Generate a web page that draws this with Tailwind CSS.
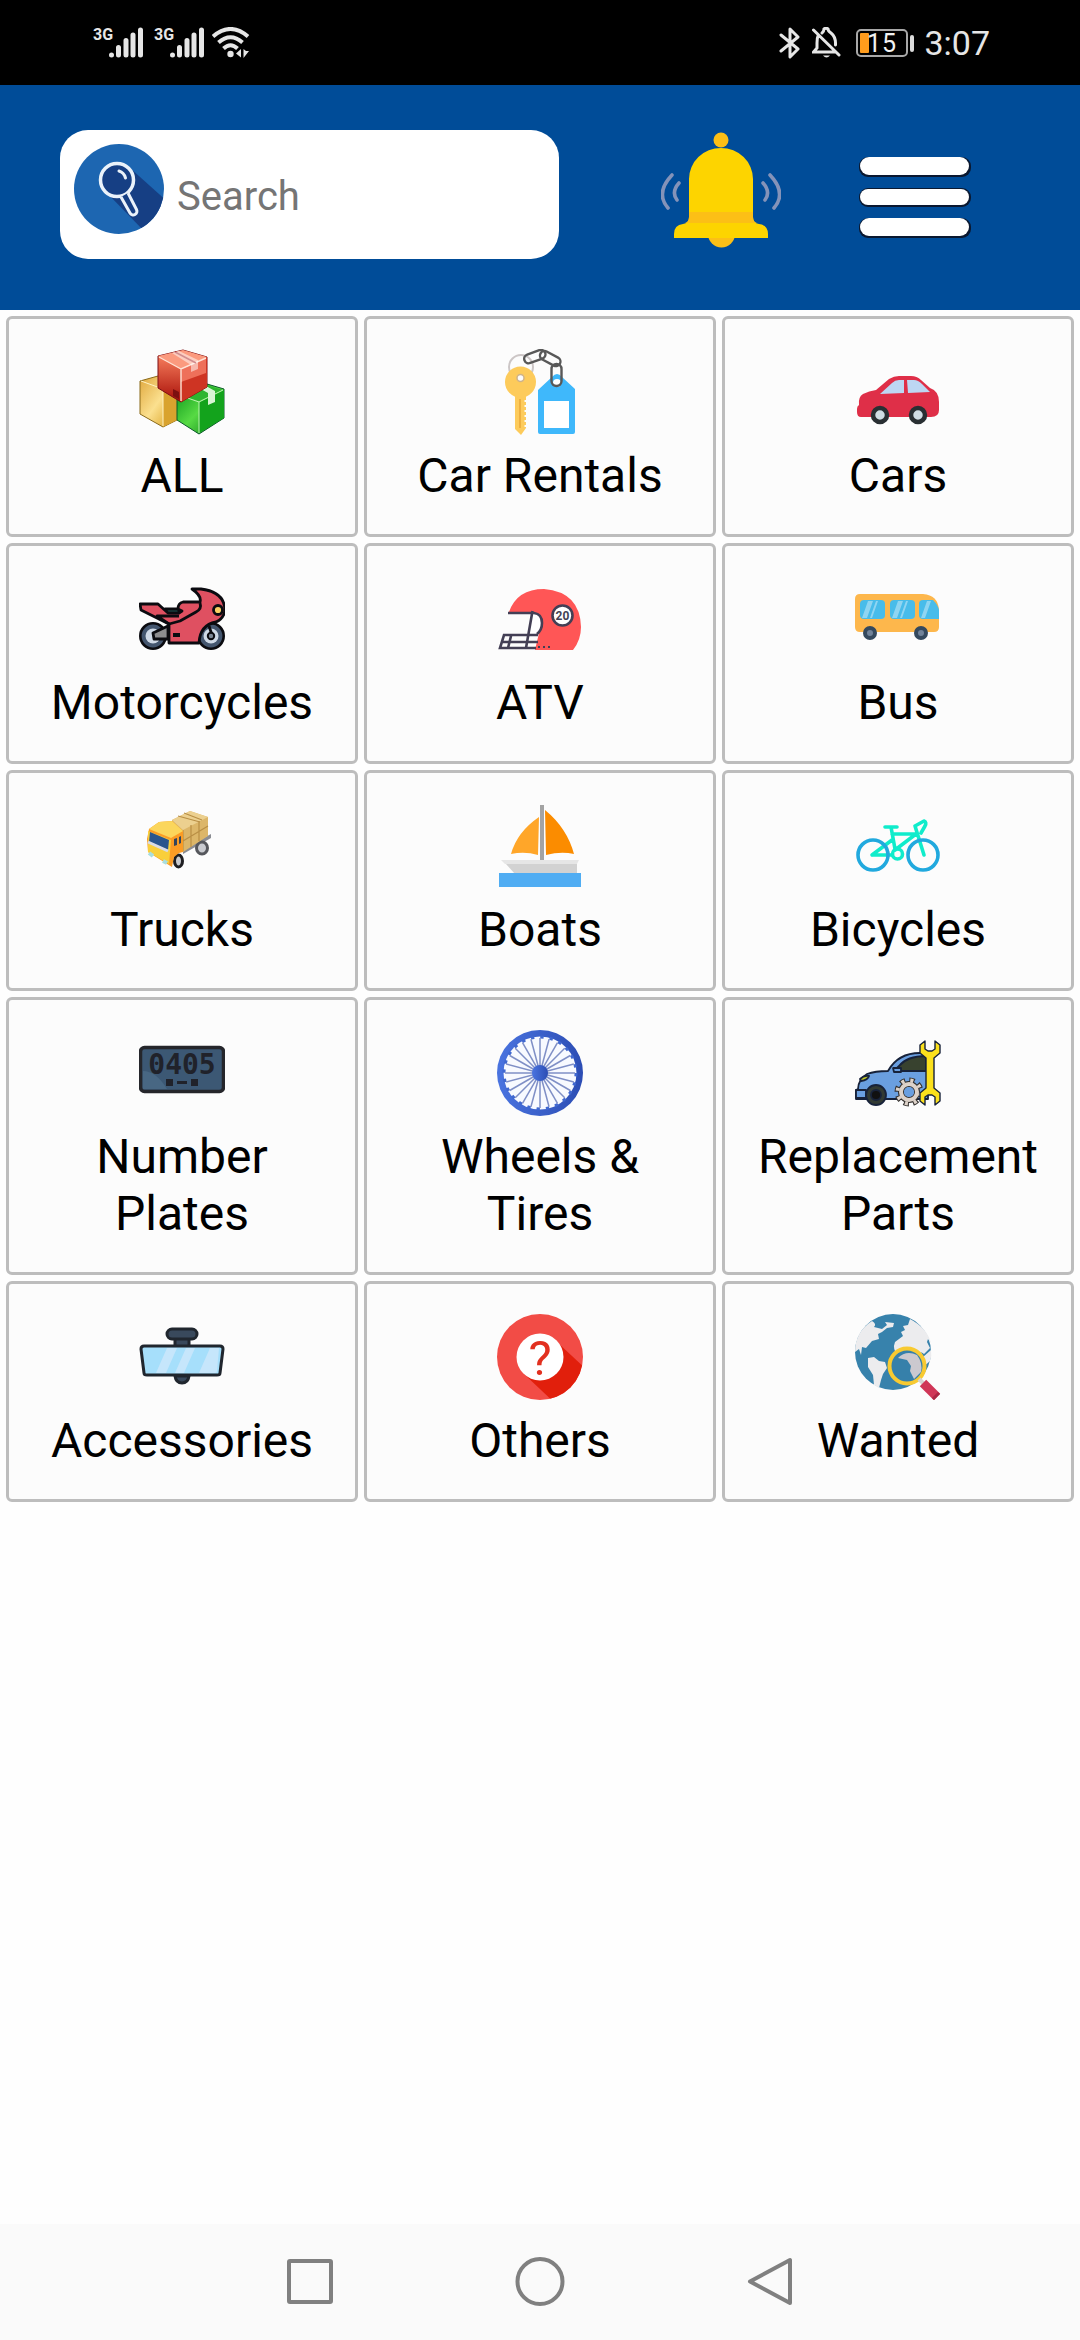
<!DOCTYPE html>
<html lang="en">
<head>
<meta charset="utf-8">
<meta name="viewport" content="width=device-width, initial-scale=1">
<title>Categories</title>
<script src="https://cdn.jsdelivr.net/npm/@tailwindcss/browser@4"></script>
</head>
<body class="flex min-h-screen flex-col bg-[#fefefe] font-['Roboto',sans-serif] text-black">

<!-- Status bar -->
<div class="flex h-[85px] items-center justify-between bg-black pr-[90px] pl-[90px] text-[#e6e6e6]">
  <div class="flex items-center">
    <svg class="h-[43px] w-[61px]" viewBox="-3 -6 61 43" fill="none" stroke="currentColor" stroke-width="5" stroke-linecap="round" role="img" aria-label="3G signal"><text x="0" y="13" font-size="16" font-weight="700" fill="currentColor" stroke="none">3G</text><path d="M18.500 28v.1M25.500 20.500v7.500M33 13.500v14.500M40 8v20M47.500 3v25"/></svg>
    <svg class="h-[43px] w-[61px]" viewBox="-3 -6 61 43" fill="none" stroke="currentColor" stroke-width="5" stroke-linecap="round" role="img" aria-label="3G signal"><text x="0" y="13" font-size="16" font-weight="700" fill="currentColor" stroke="none">3G</text><path d="M18.500 28v.1M25.500 20.500v7.500M33 13.500v14.500M40 8v20M47.500 3v25"/></svg>
    <svg class="h-[31px] w-[40px]" viewBox="0 0 40 31" fill="none" stroke="currentColor" stroke-width="4" role="img" aria-label="Wi-Fi"><path d="M1 9.500Q18.500-5.500 36 9.500M6.500 15.500Q18.500 5 30.500 15.500M11.500 21.500Q18.500 15 25.500 21.500"/><circle cx="18.500" cy="27" r="3.200" fill="currentColor" stroke="none"/><path d="M29 22v8.500l-5-4zM31.500 22v9l5.500-7h-3z" fill="currentColor" stroke="none"/></svg>
  </div>
  <div class="flex items-center gap-2">
    <svg class="h-[32px] w-[26px]" viewBox="0 0 26 32" fill="none" stroke="currentColor" stroke-width="3" stroke-linejoin="round" stroke-linecap="round" role="img" aria-label="Bluetooth"><path d="M3 8l17 14-8 8V2l8 8L3 24"/></svg>
    <svg class="h-[32px] w-[36px]" viewBox="0 0 36 32" fill="none" stroke="currentColor" stroke-width="3" stroke-linecap="round" role="img" aria-label="Silent"><path d="M1.500 3l25.500 25M6 9c-1 2-1 4-1 7v5l-3.500 4H23M10 6q2-2 2-4 2-1.500 4 0 0 2 3 4 5 4 4.500 12"/><path d="M11 28.500h7q-3.500 4-7 0z" fill="currentColor" stroke="none"/></svg>
    <svg class="h-[28px] w-[60px]" viewBox="0 0 60 28" role="img" aria-label="Battery 15 percent"><rect x="1" y="1" width="50" height="26" rx="4" fill="none" stroke="#a8a8a8" stroke-width="2"/><rect x="4" y="4" width="9" height="20" rx="1" fill="#ff9c1c"/><rect x="54" y="6" width="4" height="17" rx="2" fill="#dcdcdc"/><text x="11" y="23" font-size="25" fill="#f2f2f2">1</text><text x="26" y="23" font-size="25" fill="#f2f2f2">5</text></svg>
    <span class="text-[34px] leading-10">3:07</span>
  </div>
</div>

<!-- Header -->
<header class="flex items-start bg-[#004c98] pt-[45px] pr-[108px] pb-[51px] pl-[60px]">
  <label class="mr-[102px] flex h-[129px] min-w-0 flex-1 gap-[13px] rounded-[28px] bg-white pl-[14px]">
    <svg class="mt-[14px] h-[90px] w-[90px] shrink-0" viewBox="0 0 90 90" role="img" aria-label="Search"><defs><clipPath id="disc"><circle cx="45" cy="45" r="45"/></clipPath></defs><g clip-path="url(#disc)"><path d="M0 0h90v90H0z" fill="#1d66b1"/><path d="M56 24L94 58 71 88 32 48z" fill="#163f84"/></g><circle cx="43" cy="36" r="16.500" fill="#163f84" stroke="#eaf2fa" stroke-width="3.500"/><path d="M47 53l9 16a3.500 3.500 0 0 0 6.500-3.500L54 49" fill="#163f84" stroke="#eaf2fa" stroke-width="3" stroke-linejoin="round"/><path d="M45 27q5 1.500 6.500 7" fill="none" stroke="#eaf2fa" stroke-width="3" stroke-linecap="round"/></svg>
    <input type="search" aria-label="Search" placeholder="Search" class="h-full min-w-0 flex-1 bg-transparent pt-1 text-[40px] outline-none placeholder:text-[#757575]">
  </label>
  <div class="flex gap-[76px]">
    <button type="button" aria-label="Notifications">
      <svg class="block h-[120px] w-[120px]" viewBox="0 0 120 120"><path d="M47 104h27a13 13 0 0 1-27 0z" fill="#fcbf16"/><circle cx="60" cy="10" r="7.500" fill="#fcbf16"/><path d="M28 49a32 31 0 0 1 64 0v38q0 6 6 7 9 1 9 10v4H13v-4q0-9 9-10 6-1 6-7z" fill="#fdd400"/><path d="M28 82h64v5q0 5 4 6H24q4-1 4-6z" fill="#fcbf16"/><path d="M11 45q-17 18-4 33M18 53q-8 9-2 17M109 45q17 18 4 33M102 53q8 9 2 17" fill="none" stroke="#8493b9" stroke-width="3.600" stroke-linecap="round"/></svg>
    </button>
    <button type="button" aria-label="Menu">
      <svg class="block h-[120px] w-[115px]" viewBox="0 0 115 120"><g fill="#0a1830"><rect x="2" y="27" width="112" height="20" rx="9"/><rect x="2" y="58" width="112" height="19" rx="9"/><rect x="2" y="88" width="112" height="20" rx="9"/></g><g fill="#fff"><rect x="3" y="27" width="109" height="18" rx="9"/><rect x="3" y="59" width="109" height="16" rx="8"/><rect x="3" y="88" width="109" height="18" rx="9"/></g></svg>
    </button>
  </div>
</header>

<!-- Categories -->
<main class="grid grid-cols-3 gap-[6px] p-[6px] text-center text-[48px] leading-[57px]">

  <a href="#all" class="flex flex-col items-center gap-3 rounded-[6px] border-[3px] border-[#bdbdbd] bg-[#fcfcfc] p-[30px]">
    <svg class="h-[86px] w-[86px]" viewBox="0 0 86 86" stroke-linejoin="round" aria-hidden="true">
      <defs><linearGradient id="red" x1="0" y1="0" x2="0" y2="1"><stop offset="0" stop-color="#ff8a66"/><stop offset="1" stop-color="#a80f08"/></linearGradient><linearGradient id="gold" x1="0" y1="0" x2="1" y2="1"><stop offset="0" stop-color="#dfa73c"/><stop offset=".5" stop-color="#fbe08f"/><stop offset="1" stop-color="#d69a14"/></linearGradient><linearGradient id="green" x1="0" y1="0" x2="1" y2="1"><stop offset="0" stop-color="#089318"/><stop offset=".5" stop-color="#57da44"/><stop offset="1" stop-color="#057a13"/></linearGradient></defs>
      <path d="M1 32l18-5 19 8v36l-14 7L1 65z" fill="url(#gold)" stroke="#8a6a1a"/><path d="M24 40l14-5v36l-14 7z" fill="#d9a32e"/><path d="M2 32l22 8v37" fill="none" stroke="#fff3c4"/>
      <path d="M38 46l30-11 17 5v29L60 85 38 71z" fill="url(#green)" stroke="#0a5a2a"/><path d="M60 53l25-12v28L60 84z" fill="#13a31c"/><path d="M41 46l26-10 17 5-24 11z" fill="#2db52f"/><path d="M40 46l20 7v31M60 53l24-12" fill="none" stroke="#bdf5b0"/><path d="M60 39l9 5v12l7-3V42l-9-5z" fill="#d9f5d5"/>
      <path d="M19 7l25-6 24 7v30L42 53 19 39z" fill="url(#red)" stroke="#7d0f14"/><path d="M42 20L68 8v30L42 53z" fill="#ce3423"/><path d="M42 20L68 8 44 1 19 7z" fill="#fb9a7e"/><path d="M42 21l25-12v15L42 33z" fill="#ee705a"/><path d="M20 8l22 12v32M42 20l25-11" fill="none" stroke="#ffe3d6" stroke-width="1.400"/><path d="M36 3l21 11" stroke="#a31a1e" stroke-width="1.600"/><path d="M33 4l19 12v7l7-3v-9L40 2z" fill="#fff" opacity=".5"/><path d="M34 40l6 3v7l-6-3z" fill="#7d1010"/>
    </svg>
    <span>ALL</span>
  </a>

  <a href="#car-rentals" class="flex flex-col items-center gap-3 rounded-[6px] border-[3px] border-[#bdbdbd] bg-[#fcfcfc] p-[30px]">
    <svg class="h-[86px] w-[86px]" viewBox="0 0 86 86" aria-hidden="true">
      <circle cx="24" cy="18" r="12" fill="none" stroke="#ccc6c6" stroke-width="2"/>
      <path d="M18 46h11v33l-5 7-6-6z" fill="#fdcb5b"/><circle cx="23.500" cy="33" r="15.500" fill="#fdcb5b"/><path d="M23 50v29" stroke="#eeb040" stroke-width="2"/><path d="M28.500 51v28" stroke="#fcfcfc" stroke-width="2" stroke-dasharray="2 3"/><circle cx="23.500" cy="29" r="3.500" fill="#fcfcfc" stroke="#cfb389" stroke-width="1.500"/>
      <path d="M55 28q5-6 10 0l13 12v43q0 2-2 2H43q-2 0-2-2V41z" fill="#3fb8fb"/><path d="M47 52h25v27H47z" fill="#fff"/><circle cx="60" cy="34" r="4" fill="#fff"/>
      <g fill="none" stroke="#585858" stroke-width="2.400"><rect x="27" y="3" width="22" height="9" rx="4.500" transform="rotate(-20 38 8)"/><rect x="42" y="5" width="22" height="9" rx="4.500" transform="rotate(28 53 10)"/><rect x="54.500" y="15" width="10" height="22" rx="5"/></g>
    </svg>
    <span>Car Rentals</span>
  </a>

  <a href="#cars" class="flex flex-col items-center gap-3 rounded-[6px] border-[3px] border-[#bdbdbd] bg-[#fcfcfc] p-[30px]">
    <svg class="h-[86px] w-[86px]" viewBox="0 0 86 86" aria-hidden="true">
      <path d="M2 60q0-3 2-4-1-8 4-11 6-3 13-4L34 30q5-3 10-3h12q6 0 10 4l9 8q9 3 9 14v8q0 7-8 7H6q-4 0-4-5z" fill="#df2f48"/>
      <path d="M25 45l12-11q3-3 7-3h5v13zM52 31h7q4 0 8 4l8 8-22 1z" fill="#bdd7f3"/>
      <g fill="#d0dde4" stroke="#292f33" stroke-width="4.500"><circle cx="25" cy="66" r="7"/><circle cx="63" cy="66" r="7"/></g>
    </svg>
    <span>Cars</span>
  </a>

  <a href="#motorcycles" class="flex flex-col items-center gap-3 rounded-[6px] border-[3px] border-[#bdbdbd] bg-[#fcfcfc] p-[30px]">
    <svg class="h-[86px] w-[86px]" viewBox="0 0 86 86" stroke-linejoin="round" aria-hidden="true">
      <g stroke="#0b0b10" stroke-width="2.600"><circle cx="14" cy="60" r="12.700" fill="#44566f"/><circle cx="72" cy="60" r="12.700" fill="#44566f"/></g>
      <circle cx="14" cy="60" r="7.500" fill="#cfd9e6"/><circle cx="72" cy="60" r="7.500" fill="#cfd9e6"/>
      <g stroke="#0b0b10" stroke-width="2.800"><path d="M14 57l15-7v13H15z" fill="#8d8d8f"/><path d="M26 33h14v7H30z" fill="#1e5650"/><path d="M1 28h18l10 9h11l3-2-4-2q0-6 5-7h17q2-6-8-13h9q24 3 24 22-2 8-9 11-16 3-17 21H30V48L2 34z" fill="#df5061"/><path d="M61 27q2 6-4 9L41 45l-11 3-12-8h22" fill="none"/><circle cx="79" cy="34" r="4.500" fill="#fbcf63"/><path d="M70 50l3 9" fill="none"/></g>
      <circle cx="72" cy="60" r="3.200" fill="#7c8795" stroke="#0b0b10" stroke-width="2"/><path d="M34 59h7" stroke="#0b0b10" stroke-width="4"/>
    </svg>
    <span>Motorcycles</span>
  </a>

  <a href="#atv" class="flex flex-col items-center gap-3 rounded-[6px] border-[3px] border-[#bdbdbd] bg-[#fcfcfc] p-[30px]">
    <svg class="h-[86px] w-[86px]" viewBox="0 0 86 86" aria-hidden="true">
      <path d="M12 36Q20 13 47 13q36 3 37 38 0 13-8 23H38l4-17 1-14q-2-6-7-7z" fill="#ff5656"/>
      <path d="M36 37q9 1 9 10 0 8-5 11l-9-1z" fill="#fff"/>
      <g fill="none" stroke="#433f55" stroke-width="2.600"><path d="M11 37h26q8 1 8 10 0 7-5 11M35.500 35L29 72M41 59H7L3 72h36M5 66h36M14 60l-3 12"/><circle cx="65.500" cy="39.500" r="10" fill="#fff"/></g>
      <text x="65.500" y="44" text-anchor="middle" font-size="12" font-weight="700" fill="#433f55">20</text>
      <path d="M41 71h12" stroke="#433f55" stroke-width="2" stroke-dasharray="2 3"/>
    </svg>
    <span>ATV</span>
  </a>

  <a href="#bus" class="flex flex-col items-center gap-3 rounded-[6px] border-[3px] border-[#bdbdbd] bg-[#fcfcfc] p-[30px]">
    <svg class="h-[86px] w-[86px]" viewBox="0 0 86 86" aria-hidden="true">
      <path d="M5 18h63q15 1 16 16v17q0 5-5 5H5q-5 0-5-5V23q0-5 5-5z" fill="#fdb74c"/>
      <g fill="#48bcea"><rect x="5" y="24" width="25" height="19" rx="4"/><rect x="35" y="24" width="25" height="19" rx="4"/><path d="M68 24h10q5 5 6 10v9H68q-4 0-4-4V28q0-4 4-4z"/></g>
      <path d="M7 42l6-17h5l-6 17zM15 42l6-17h2l-6 17zM37 42l6-17h5l-6 17zM45 42l6-17h2l-6 17zM66 42l6-17h4l-6 17z" fill="#8fd5f2"/>
      <g fill="#71839a" stroke="#34495e" stroke-width="4"><circle cx="15" cy="57" r="5"/><circle cx="66" cy="57" r="5"/></g>
    </svg>
    <span>Bus</span>
  </a>

  <a href="#trucks" class="flex flex-col items-center gap-3 rounded-[6px] border-[3px] border-[#bdbdbd] bg-[#fcfcfc] p-[30px]">
    <svg class="h-[86px] w-[86px]" viewBox="0 0 86 86" stroke-linejoin="round" aria-hidden="true">
      <path d="M44 46l28-15v4L44 51z" fill="#8b8d93"/>
      <g fill="#c9cbd0" stroke="#55575c" stroke-width="3"><ellipse cx="63" cy="45" rx="5.500" ry="6"/><ellipse cx="39.500" cy="58" rx="4" ry="6" stroke="#1f1f22"/></g>
      <path d="M33 17L51 8l18 6v19L44 49 33 32z" fill="#dcb669"/><path d="M33 17L51 8l18 6-25 13z" fill="#ecd08f"/><path d="M44 27v21M52 22v22M60 18v20M69 23L44 38M39 13l22 6M45 10l18 7" stroke="#b98f45" stroke-width="1.200" fill="none"/>
      <path d="M10 26l10-7 13-1 11 10v21l-4 1-5 4-2 10-24-15-1-13z" fill="#fb9c25"/><path d="M10 26l10-7 13-1 11 10-12 7z" fill="#fbd65c"/><path d="M9 28l23 9-2 24-21-12z" fill="#f9cf3b"/><path d="M11 29l19 8-1 10-19-8z" fill="#2a558d"/><path d="M9 39l20 9" stroke="#d9dce6" stroke-width="3"/>
      <path d="M35 36l3-1v7l-3 1zM40 34l2-1v7l-2 1z" fill="#33465c"/><path d="M10 50l4 3M24 58l4 2" stroke="#a9dede" stroke-width="4"/>
    </svg>
    <span>Trucks</span>
  </a>

  <a href="#boats" class="flex flex-col items-center gap-3 rounded-[6px] border-[3px] border-[#bdbdbd] bg-[#fcfcfc] p-[30px]">
    <svg class="h-[86px] w-[86px]" viewBox="0 0 86 86" aria-hidden="true">
      <path d="M42 14Q20 29 14 51q14-3 27 1z" fill="#ffa629"/><path d="M48 7q22 18 29 44-13-3-28 1z" fill="#fb8c00"/><path d="M43 2h4v56h-4z" fill="#a3a3a3"/>
      <path d="M4 57h78l-2 4H8z" fill="#e6e6e6"/><path d="M9 61h71v10H18z" fill="#d2d2d2"/><path d="M2 70h82v14H2z" fill="#50adf3"/>
    </svg>
    <span>Boats</span>
  </a>

  <a href="#bicycles" class="flex flex-col items-center gap-3 rounded-[6px] border-[3px] border-[#bdbdbd] bg-[#fcfcfc] p-[30px]">
    <svg class="h-[86px] w-[86px]" viewBox="0 0 86 86" fill="none" stroke-width="3.600" stroke-linecap="round" stroke-linejoin="round" aria-hidden="true">
      <g stroke="#10eccb"><path d="M30 24h12M36 24l4 22M37 31h24M61 31L40 47M60 23l9 29M60 23l9-5q3 1 1 5l-4 7M17 52l20-15M17 52h20"/><circle cx="42.500" cy="51" r="5"/></g>
      <g stroke="#21a9de"><circle cx="18" cy="52" r="15"/><circle cx="68" cy="52" r="15"/></g>
    </svg>
    <span>Bicycles</span>
  </a>

  <a href="#number-plates" class="flex flex-col items-center gap-3 rounded-[6px] border-[3px] border-[#bdbdbd] bg-[#fcfcfc] p-[30px]">
    <svg class="h-[86px] w-[86px]" viewBox="0 0 86 86" aria-hidden="true">
      <rect x="1.500" y="17.500" width="83" height="44" rx="4" fill="#3c5874" stroke="#25262b" stroke-width="3.500"/><path d="M4 41q13 0 24 18H4z" fill="#486783"/>
      <text x="43" y="44" text-anchor="middle" font-family="DejaVu Sans Mono, monospace" font-size="28" font-weight="700" fill="#20222a">0405</text>
      <path d="M27 49h7v7h-7zM38 51h10v3H38zM52 49h7v7h-7z" fill="#20222a"/>
    </svg>
    <span>Number Plates</span>
  </a>

  <a href="#wheels-tires" class="flex flex-col items-center gap-3 rounded-[6px] border-[3px] border-[#bdbdbd] bg-[#fcfcfc] p-[30px]">
    <svg class="h-[86px] w-[86px]" viewBox="0 0 86 86" aria-hidden="true">
      <defs><linearGradient id="rim" x1="0" y1="0" x2="1" y2="0"><stop offset="0" stop-color="#4a74e0"/><stop offset="1" stop-color="#2c4db4"/></linearGradient></defs>
      <circle cx="43" cy="43" r="43" fill="url(#rim)"/><circle cx="43" cy="43" r="36.500" fill="#f8faff"/>
      <circle cx="43" cy="43" r="36" fill="none" stroke="#4068d0" stroke-width="3" stroke-dasharray="3.425 6"/>
      <g stroke="#7f8fc6" stroke-width="1.500"><path id="spoke" d="M43 8v70"/><use href="#spoke" transform="rotate(15 43 43)"/><use href="#spoke" transform="rotate(30 43 43)"/><use href="#spoke" transform="rotate(45 43 43)"/><use href="#spoke" transform="rotate(60 43 43)"/><use href="#spoke" transform="rotate(75 43 43)"/><use href="#spoke" transform="rotate(90 43 43)"/><use href="#spoke" transform="rotate(105 43 43)"/><use href="#spoke" transform="rotate(120 43 43)"/><use href="#spoke" transform="rotate(135 43 43)"/><use href="#spoke" transform="rotate(150 43 43)"/><use href="#spoke" transform="rotate(165 43 43)"/></g>
      <circle cx="43" cy="43" r="8" fill="url(#rim)"/>
    </svg>
    <span>Wheels &amp; Tires</span>
  </a>

  <a href="#replacement-parts" class="flex flex-col items-center gap-3 rounded-[6px] border-[3px] border-[#bdbdbd] bg-[#fcfcfc] p-[30px]">
    <svg class="h-[86px] w-[86px]" viewBox="0 0 86 86" stroke="#17223a" stroke-width="1.800" stroke-linejoin="round" aria-hidden="true">
      <path d="M1 69v-9l2-1q0-9 9-15 8-3 21-3 10-18 32-18h8v46z" fill="#6a9fe0"/><path d="M44 41h-5l5-5q8-10 27-10v15z" fill="#38422f"/><path d="M38 38h8v4h-7zM1 60h10v8H1z" fill="#6a9fe0"/><path d="M5 49q4-4 9-3-1 4-8 5z" fill="#c3cc2b"/>
      <circle cx="21" cy="65" r="10" fill="#323a33"/><circle cx="21" cy="65" r="5" fill="#111"/>
      <g fill="none" stroke="#33302e"><circle cx="54" cy="62" r="11.500" stroke-width="6" stroke-dasharray="5 4.030"/><circle cx="54" cy="62" r="8" stroke-width="6"/></g>
      <circle cx="54" cy="62" r="5" fill="#6a9fe0" stroke="none"/>
      <g fill="none" stroke="#ddd2c9"><circle cx="54" cy="62" r="11.500" stroke-width="4" stroke-dasharray="3 6.030" stroke-dashoffset="-1"/><circle cx="54" cy="62" r="8" stroke-width="4"/></g>
      <path d="M70 11l-5 4v8l6 5v30l-6 5v8l5 4v-8l3-2h4l3 2v8l5-4v-8l-6-5V28l6-5v-8l-5-4v8l-3 2h-4l-3-2z" fill="#fbe01c" stroke-width="1.400"/>
    </svg>
    <span>Replacement Parts</span>
  </a>

  <a href="#accessories" class="flex flex-col items-center gap-3 rounded-[6px] border-[3px] border-[#bdbdbd] bg-[#fcfcfc] p-[30px]">
    <svg class="h-[86px] w-[86px]" viewBox="0 0 86 86" stroke="#20262e" stroke-width="3" stroke-linejoin="round" aria-hidden="true">
      <path d="M36 24h14v9H36z" fill="#39495c"/><rect x="28" y="15" width="30" height="10" rx="5" fill="#39495c"/><path d="M36 62h14q-1 7-7 7t-7-7z" fill="#39495c"/>
      <path d="M5 32h76q3 0 3 3l-3 24q0 2-3 2H8q-3 0-3-2L2 35q0-3 3-3z" fill="#a6dffb"/><path d="M17 59l11-25h10L27 59zM36 59l11-25h9L45 59zM60 59l11-25h9l-2 23q0 2-2 2z" fill="#c6e6fb" stroke="none"/>
    </svg>
    <span>Accessories</span>
  </a>

  <a href="#others" class="flex flex-col items-center gap-3 rounded-[6px] border-[3px] border-[#bdbdbd] bg-[#fcfcfc] p-[30px]">
    <svg class="h-[86px] w-[86px]" viewBox="0 0 86 86" aria-hidden="true">
      <defs><clipPath id="badge"><circle cx="43" cy="43" r="43"/></clipPath></defs>
      <g clip-path="url(#badge)"><path d="M0 0h86v86H0z" fill="#f24c46"/><path d="M61 29l30 28-29 36L26 59z" fill="#e11f0c"/></g><circle cx="43" cy="43" r="23.500" fill="#fff"/>
      <text x="43" y="61" text-anchor="middle" font-size="49" fill="#e2301f">?</text>
    </svg>
    <span>Others</span>
  </a>

  <a href="#wanted" class="flex flex-col items-center gap-3 rounded-[6px] border-[3px] border-[#bdbdbd] bg-[#fcfcfc] p-[30px]">
    <svg class="h-[86px] w-[86px]" viewBox="0 0 86 86" aria-hidden="true">
      <circle cx="38" cy="38" r="38" fill="#3782ac"/>
      <path d="M17 7q5 3 2 6l8 2 5-4-2-3 9 1-1 4-6 1-5 4-4 2 1 5-7 2-6 7-4-1-1 8-2-6-4 3q0-20 17-31zM13 44l6-1 5 4 6 1 2 6-4 6-2 6-2 8-5-3-1-10-5-8zM55 5q17 9 21 24l-3-4-1 3 3 6-6 6-3-2 2 5 8-7q1 6-1 11l-9 8-9-12-14-1q-6-7-3-14l8-6-2-4 4-2-2-4 5-1z" fill="#ececee"/>
      <circle cx="52" cy="52" r="17" fill="#3680aa"/><path d="M43 44q8-8 19-3 6 8 4 17l-7 7-4-8 1-5-4-6z" fill="#cbc9cf"/><circle cx="52" cy="52" r="17.500" fill="none" stroke="#f8ca31" stroke-width="4"/>
      <path d="M64 65l5 5" stroke="#d4d4d4" stroke-width="4"/><path d="M68 69l14 14" stroke="#d03657" stroke-width="9"/><path d="M84 79l-6 6" stroke="#aa2643" stroke-width="3"/>
    </svg>
    <span>Wanted</span>
  </a>
</main>

<!-- System navigation -->
<nav aria-label="System" class="mt-auto grid h-[116px] grid-cols-3 bg-[#fafafa] px-[18%] text-[#808080]">
  <button type="button" aria-label="Recents" class="flex items-center justify-center"><svg class="h-[50px] w-[50px]" viewBox="0 0 50 50" fill="none" stroke="currentColor" stroke-width="4"><rect x="4" y="4" width="42" height="41" rx="1"/></svg></button>
  <button type="button" aria-label="Home" class="flex items-center justify-center"><svg class="h-[50px] w-[50px]" viewBox="0 0 50 50" fill="none" stroke="currentColor" stroke-width="4"><circle cx="25" cy="24.500" r="22.500"/></svg></button>
  <button type="button" aria-label="Back" class="flex items-center justify-center"><svg class="h-[50px] w-[50px]" viewBox="0 0 50 50" fill="none" stroke="currentColor" stroke-width="4" stroke-linejoin="round"><path d="M45 3v43L5 24.500z"/></svg></button>
</nav>
</body>
</html>
